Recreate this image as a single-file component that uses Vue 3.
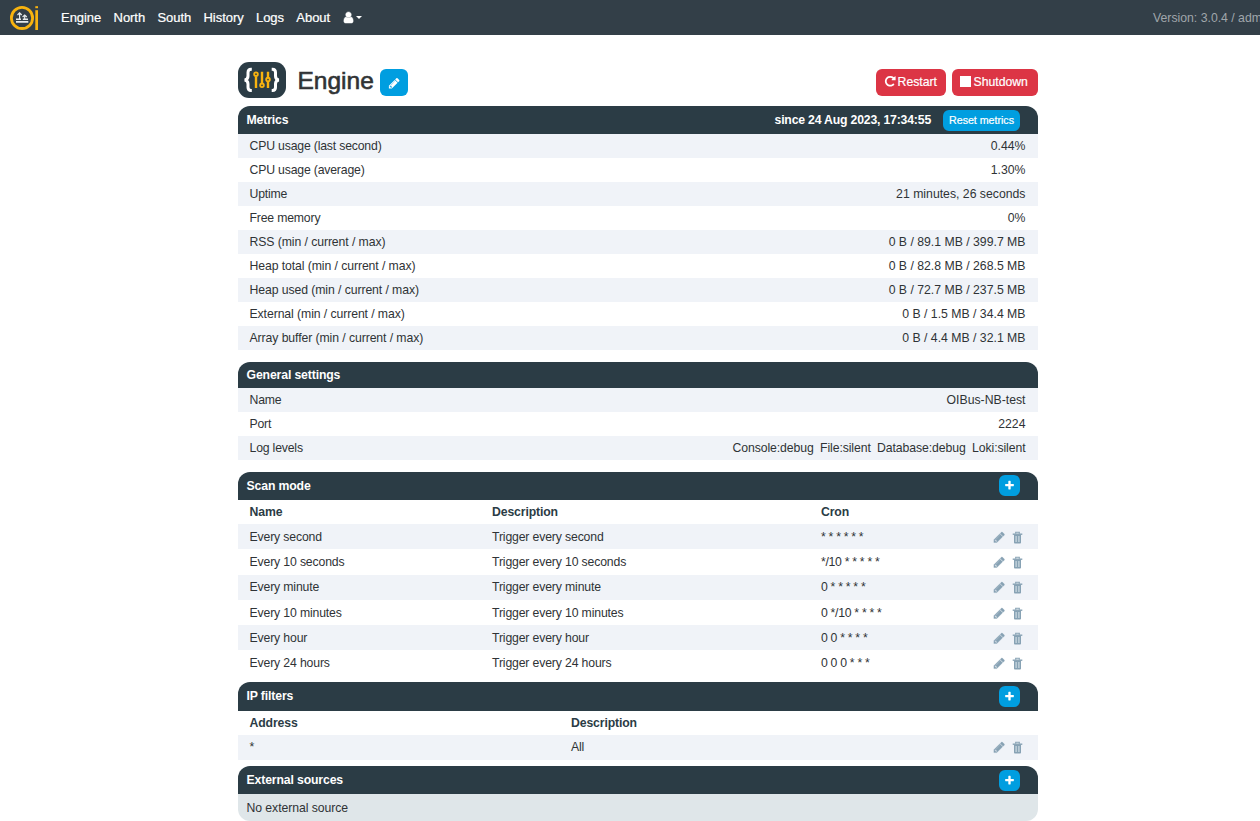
<script setup>
const icons = {
  pencil: 'M491 1536l91-91-235-235-91 91v107h128v128h107zm523-928q0-22-22-22-10 0-17 7l-542 542q-7 7-7 17 0 22 22 22 10 0 17-7l542-542q7-7 7-17zm-54-192l416 416-832 832h-416v-416zm683 96q0 53-37 90l-166 166-416-416 166-165q36-38 90-38 53 0 91 38l235 234q37 39 37 91z',
  trash: 'M3 3.4h7v8.2q0 .9-.9.9H3.900q-.9 0-.9-.9z',
  user: 'M1536 1399q0 109-62.5 187t-150.5 78h-854q-88 0-150.5-78t-62.5-187q0-85 8.5-160.5t31.5-152 58.5-131 94-89 134.5-34.5q131 128 313 128t313-128q76 0 134.5 34.5t94 89 58.5 131 31.5 152 8.5 160.5zm-256-887q0 159-112.5 271.5t-271.5 112.5-271.5-112.5-112.5-271.5 112.5-271.5 271.5-112.5 271.5 112.5 112.5 271.5z',
  repeat: 'M1664 256v448q0 26-19 45t-45 19h-448q-42 0-59-40-17-39 14-69l138-138q-148-137-349-137-104 0-198.5 40.5t-163.5 109.5-109.5 163.5-40.5 198.5 40.5 198.5 109.5 163.5 163.5 109.5 198.5 40.5q119 0 225-52t179-147q7-10 23-12 15 0 25 9l137 138q9 8 9.5 20.5t-7.5 22.5q-109 132-264 204.5t-327 72.5q-156 0-298-61t-245-164-164-245-61-298 61-298 164-245 245-164 298-61q147 0 284.5 55.5t244.5 156.5l130-129q29-31 70-14 39 17 39 59z',
  plus: 'M1600 736v192q0 40-28 68t-68 28h-416v416q0 40-28 68t-68 28h-192q-40 0-68-28t-28-68v-416h-416q-40 0-68-28t-28-68v-192q0-40 28-68t68-28h416v-416q0-40 28-68t68-28h192q40 0 68 28t28 68v416h416q40 0 68 28t28 68z',
}

const nav = ['Engine', 'North', 'South', 'History', 'Logs', 'About']

const metrics = [
  ['CPU usage (last second)', '0.44%'],
  ['CPU usage (average)', '1.30%'],
  ['Uptime', '21 minutes, 26 seconds'],
  ['Free memory', '0%'],
  ['RSS (min / current / max)', '0 B / 89.1 MB / 399.7 MB'],
  ['Heap total (min / current / max)', '0 B / 82.8 MB / 268.5 MB'],
  ['Heap used (min / current / max)', '0 B / 72.7 MB / 237.5 MB'],
  ['External (min / current / max)', '0 B / 1.5 MB / 34.4 MB'],
  ['Array buffer (min / current / max)', '0 B / 4.4 MB / 32.1 MB'],
]

const logLevels = ['Console:debug', 'File:silent', 'Database:debug', 'Loki:silent']

const scanModes = [
  ['Every second', 'Trigger every second', '* * * * * *'],
  ['Every 10 seconds', 'Trigger every 10 seconds', '*/10 * * * * *'],
  ['Every minute', 'Trigger every minute', '0 * * * * *'],
  ['Every 10 minutes', 'Trigger every 10 minutes', '0 */10 * * * *'],
  ['Every hour', 'Trigger every hour', '0 0 * * * *'],
  ['Every 24 hours', 'Trigger every 24 hours', '0 0 0 * * *'],
]
</script>

<template>
  <div class="page">
    <header class="navbar">
      <svg class="logo" viewBox="0 0 30 26">
        <circle cx="12" cy="12.9" r="10.6" fill="none" stroke="#f8b30f" stroke-width="2.8" />
        <g fill="none" stroke="#e6eaec" stroke-width="1.2">
          <path d="M6 14.2H11M12.8 14.2H18M6 16.9H18.3" stroke-width="1.6" />
          <path d="M9.6 15V8M7.5 10l2.1-2.2 2.1 2.2M14.7 15v-5M12.6 12l2.1-2 2.1 2" />
        </g>
        <rect x="25.3" y="1.2" width="2.7" height="2" fill="#f8b30f" />
        <rect x="25.3" y="5.2" width="2.7" height="19.8" fill="#f8b30f" />
      </svg>
      <nav class="links">
        <a v-for="item in nav" :key="item">{{ item }}</a>
        <a class="account">
          <svg class="user" viewBox="0 0 1792 1792"><path :d="icons.user" /></svg>
          <span class="caret"></span>
        </a>
      </nav>
      <div class="version">Version: 3.0.4 / admin</div>
    </header>

    <main class="content">
      <div class="title-row">
        <svg class="engine-icon" viewBox="0 0 48 36">
          <rect width="48" height="36" rx="11" fill="#2b3c45" />
          <g fill="none" stroke="#fff" stroke-width="3">
            <path d="M13.8 7.3H13Q10 7.3 10 10.6V14Q10 17.6 6.6 18Q10 18.4 10 22V25.2Q10 28.5 13 28.5H13.8" />
            <path d="M33.700 7.3H34.5Q37.5 7.3 37.5 10.6V14Q37.5 17.6 40.9 18Q37.5 18.4 37.5 22V25.2Q37.5 28.5 34.5 28.5H33.7" />
          </g>
          <g fill="none" stroke="#f8b30f" stroke-width="2.4">
            <path d="M18 14.5V26M24 9.800V21M30 9.800V16M30 19.2V26" />
            <g stroke-width="1.9">
              <circle cx="18" cy="12.2" r="1.8" />
              <circle cx="24" cy="23.3" r="1.8" />
              <circle cx="30" cy="17.6" r="1.8" />
            </g>
          </g>
        </svg>
        <h1>Engine</h1>
        <button class="btn edit"><svg viewBox="0 0 1792 1792"><path :d="icons.pencil" /></svg></button>
        <div class="actions">
          <button class="btn danger restart"><svg viewBox="0 0 1792 1792"><path :d="icons.repeat" /></svg>Restart</button>
          <button class="btn danger shutdown"><i class="stop"></i>Shutdown</button>
        </div>
      </div>

      <section class="metrics">
        <div class="box-head h28">
          <h2>Metrics</h2>
          <span class="since">since 24 Aug 2023, 17:34:55</span>
          <button class="btn reset">Reset metrics</button>
        </div>
        <div v-for="row in metrics" :key="row[0]" class="row pair">
          <span :class="{ range: row[0].includes('/') }">{{ row[0] }}</span><span>{{ row[1] }}</span>
        </div>
      </section>

      <section class="general">
        <div class="box-head h26"><h2>General settings</h2></div>
        <div class="row pair"><span>Name</span><span>OIBus-NB-test</span></div>
        <div class="row pair"><span>Port</span><span>2224</span></div>
        <div class="row pair">
          <span>Log levels</span>
          <span class="levels"><span v-for="l in logLevels" :key="l">{{ l }}</span></span>
        </div>
      </section>

      <section class="scan">
        <div class="box-head h28">
          <h2>Scan mode</h2>
          <button class="btn add"><svg viewBox="0 0 1792 1792"><path :d="icons.plus" /></svg></button>
        </div>
        <div class="row head"><b>Name</b><b>Description</b><b>Cron</b></div>
        <div v-for="row in scanModes" :key="row[0]" class="row line">
          <span>{{ row[0] }}</span><span>{{ row[1] }}</span><span class="cron">{{ row[2] }}</span>
          <div class="tools">
            <svg viewBox="0 0 1792 1792"><path :d="icons.pencil" /></svg>
            <svg class="trash" viewBox="0 0 13 13">
              <path class="lid" d="M4.700 2.700V1.300h3.600v1.400" /><path d="M1.700 2.500h9.600v1.400H1.700z" /><path :d="icons.trash" />
              <path class="slots" d="M5.100 5v6M7.900 5v6" />
            </svg>
          </div>
        </div>
      </section>

      <section class="filters">
        <div class="box-head h29">
          <h2>IP filters</h2>
          <button class="btn add"><svg viewBox="0 0 1792 1792"><path :d="icons.plus" /></svg></button>
        </div>
        <div class="row head"><b>Address</b><b>Description</b></div>
        <div class="row line">
          <span>*</span><span>All</span>
          <div class="tools">
            <svg viewBox="0 0 1792 1792"><path :d="icons.pencil" /></svg>
            <svg class="trash" viewBox="0 0 13 13">
              <path class="lid" d="M4.700 2.700V1.300h3.600v1.400" /><path d="M1.700 2.500h9.600v1.400H1.700z" /><path :d="icons.trash" />
              <path class="slots" d="M5.100 5v6M7.900 5v6" />
            </svg>
          </div>
        </div>
      </section>

      <section class="sources">
        <div class="box-head h28">
          <h2>External sources</h2>
          <button class="btn add"><svg viewBox="0 0 1792 1792"><path :d="icons.plus" /></svg></button>
        </div>
        <div class="empty">No external source</div>
      </section>
    </main>
  </div>
</template>

<style>
body { background: #fff; overflow: hidden; }
</style>

<style scoped>
.page {
  height: 821px;
  overflow: hidden;
  font-family: "Liberation Sans", Arial, sans-serif;
  font-size: 12.25px;
  color: #2f3336;
}
.navbar {
  height: 35px;
  box-sizing: border-box;
  padding-left: 10px;
  background: #333f48;
  display: flex;
  align-items: center;
  overflow: hidden;
}
.logo { width: 30px; height: 26px; flex: none; }
.links {
  display: flex;
  gap: 12.3px;
  margin-left: 21px;
  color: #fff;
  font-size: 13px;
  line-height: 35px;
  letter-spacing: -0.04px;
  -webkit-text-stroke: 0.2px;
}
.account { display: flex; align-items: center; }
.user { width: 13px; height: 13px; fill: #fff; stroke: #fff; stroke-width: 60px; }
.caret { margin-left: 1px; border: 3px solid transparent; border-top-color: #fff; border-bottom: 0; }
.version {
  margin-left: auto;
  margin-right: -11.5px;
  flex: none;
  color: #a0a6ab;
  white-space: nowrap;
}
.content { width: 800px; margin-left: 238px; }
.title-row { height: 71px; display: flex; box-sizing: border-box; padding-top: 27px; }
.engine-icon { width: 48px; height: 36px; }
h1 { margin: 0 0 0 11.5px; font-size: 24.5px; font-weight: 400; line-height: 37px; color: #303335; -webkit-text-stroke: 0.6px; }
.btn {
  border: 0;
  padding: 0;
  border-radius: 6px;
  font-family: inherit;
  color: #fff;
  background: #009ee0;
  display: flex;
  align-items: center;
  justify-content: center;
  white-space: nowrap;
  -webkit-text-stroke: 0.2px;
}
.btn svg { fill: #fff; }
.edit { width: 28px; height: 27px; margin: 7px 0 0 6.5px; }
.edit svg { width: 12.5px; height: 12.5px; margin-top: 1px; }
.actions { margin: 7px 0 0 auto; display: flex; gap: 6px; }
.danger { height: 27px; padding-bottom: 2px; background: #dc3545; font-size: 12.25px; letter-spacing: -0.02px; }
.restart { width: 70px; padding-right: 1px; }
.restart svg { width: 12.5px; height: 12.5px; margin-right: 1px; }
.shutdown { width: 86px; padding-right: 2px; }
.stop { width: 11px; height: 11px; background: #fff; margin-right: 2.5px; }
.box-head {
  box-sizing: border-box;
  padding: 0 18px 0 8.5px;
  border-radius: 12px 12px 0 0;
  background: #2b3c45;
  color: #fff;
  display: flex;
  align-items: center;
}
.h26 { height: 26px; }
.h28 { height: 28px; }
.h29 { height: 29px; }
h2 { margin: 0 auto 0 0; font-size: 12.25px; font-weight: 700; letter-spacing: -0.14px; }
.since { font-weight: 700; margin-right: 12px; letter-spacing: -0.19px; }
.reset { width: 77px; height: 21px; font-size: 10.7px; letter-spacing: -0.03px; }
.add { width: 21px; height: 21px; }
.scan .add { margin-bottom: 2px; }
.sources .add { margin-top: 1px; }
.add svg { width: 11px; height: 11px; }
.row { height: 24px; box-sizing: border-box; padding: 0 12.5px 0 11.5px; align-items: center; }
.pair { display: flex; justify-content: space-between; }
.pair > span:first-child { letter-spacing: -0.18px; }
.pair > span.range:first-child { letter-spacing: -0.09px; }
.pair:nth-child(even), .line:nth-child(odd) { background: #f0f3f8; }
.levels { display: flex; gap: 6.3px; letter-spacing: -0.09px; }
.general, .scan { margin-top: 12px; }
.scan .row { display: grid; grid-template-columns: 242.5px 329px 1fr auto; }
.scan .line { height: 25.3px; }
.line > span { letter-spacing: -0.15px; }
.line > span.cron { letter-spacing: -0.3px; }
.filters { margin-top: 6.2px; }
.filters .row { display: grid; grid-template-columns: 321.5px 1fr auto; }
.filters .line { height: 25px; }
.head { color: #2b3c45; letter-spacing: -0.13px; }
.tools { display: flex; gap: 5.5px; margin: 1px 2px 0 0; }
.tools svg { width: 12.5px; height: 12.5px; fill: #87a2b4; stroke: #87a2b4; stroke-width: 45px; }
.tools .trash { width: 13px; height: 13px; stroke: none; }
.trash .lid { fill: none; stroke: #87a2b4; stroke-width: 1.1px; }
.trash .slots { stroke: #d5e0e7; stroke-width: 1.1px; }
.sources { margin-top: 6px; }
.empty { height: 27px; box-sizing: border-box; padding-top: 1px; line-height: 26px; padding-left: 8.5px; background: #dfe6e9; border-radius: 0 0 12px 12px; letter-spacing: -0.07px; }
</style>
